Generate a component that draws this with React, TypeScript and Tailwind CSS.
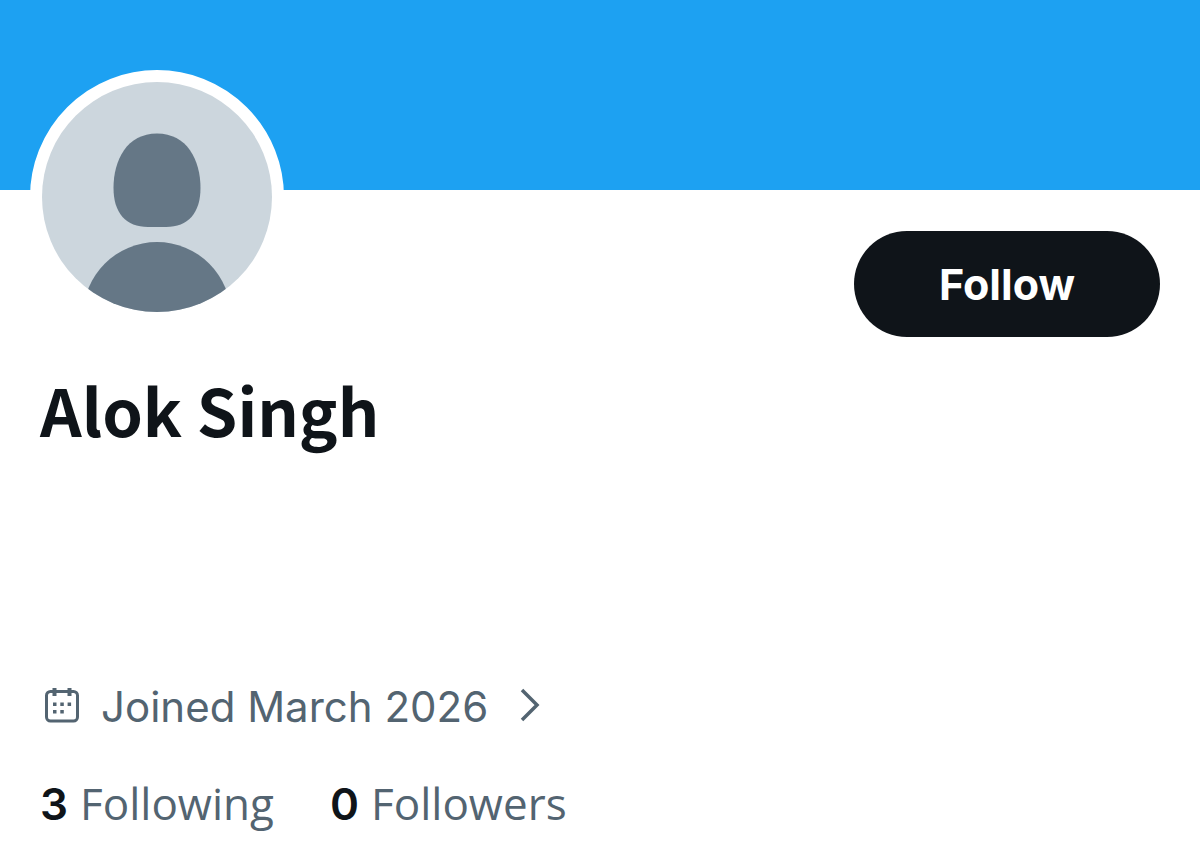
function DefaultAvatar() {
  return (
    <svg viewBox="0 0 230 230" className="block h-full w-full" role="img" aria-label="Profile picture">
      <clipPath id="avatar-clip">
        <circle cx="115" cy="115" r="115" />
      </clipPath>
      <g clipPath="url(#avatar-clip)">
        <rect width="230" height="230" fill="#ccd6dd" />
        <path
          d="M115 51.500C145 51.500 158.500 78 158.500 106C158.500 131 146 145 124 145H106C84 145 71.500 131 71.500 106C71.500 78 85 51.500 115 51.500Z"
          fill="#657786"
        />
        <circle cx="115" cy="234" r="74" fill="#657786" />
      </g>
    </svg>
  );
}

function CalendarIcon() {
  return (
    <svg viewBox="0 0 34 36" className="h-9 w-[34px] shrink-0" aria-hidden="true">
      <rect x="1.500" y="4.500" width="31" height="29.500" rx="4" fill="none" stroke="#536471" strokeWidth="3" />
      <path d="M9.500 1v8M24.500 1v8" stroke="#536471" strokeWidth="4" />
      <path
        d="M8 15.500h3.500v3.500h-3.500zM15.300 15.500h3.500v3.500h-3.500zM22.600 15.500h3.500v3.500h-3.500zM8 23h3.500v3.500h-3.500zM15.300 23h3.500v3.500h-3.500z"
        fill="#536471"
      />
    </svg>
  );
}

function ChevronIcon() {
  return (
    <svg viewBox="0 0 20 34" className="h-[34px] w-5 shrink-0" aria-hidden="true">
      <path d="M2 2L17 17L2 32" fill="none" stroke="#536471" strokeWidth="3.500" />
    </svg>
  );
}

const stats = [
  { count: 3, label: "Following" },
  { count: 0, label: "Followers" },
];

export default function App() {
  return (
    <main className="min-h-screen bg-white pb-5 font-['Open_Sans','Noto_Sans',sans-serif] text-[#0f1419]">
      <div className="h-[190px] bg-[#1da1f2]" />

      <div className="flex items-start justify-between pr-10 pl-[30px]">
        <div className="-mt-[120px] h-[254px] w-[254px] rounded-full border-[12px] border-white bg-white">
          <DefaultAvatar />
        </div>

        <button
          type="button"
          className="mt-[41px] h-[106px] w-[306px] cursor-pointer rounded-full bg-[#0f1419] font-['Inter',sans-serif] text-[43px] leading-none font-bold text-white"
        >
          Follow
        </button>
      </div>

      <div className="px-10">
        <h1 className="mt-8 font-['Noto_Sans_CJK_JP',sans-serif] text-[65px] leading-[80px] font-bold">
          Alok Singh
        </h1>

        <a
          href="#about"
          className="mt-[230px] flex w-fit items-center font-['Inter',sans-serif] text-[42px] leading-[56px] text-[#536471]"
        >
          <span className="mr-[22px] ml-[5px] pb-1">
            <CalendarIcon />
          </span>
          Joined March 2026
          <span className="ml-8 pb-1">
            <ChevronIcon />
          </span>
        </a>

        <div className="mt-10 flex gap-14 text-[44px] leading-[56px]">
          {stats.map((stat) => (
            <a key={stat.label} href={`#${stat.label.toLowerCase()}`} className="flex items-baseline gap-3">
              <span className="font-['Inter',sans-serif] font-semibold">{stat.count}</span>
              <span className="text-[#536471]">{stat.label}</span>
            </a>
          ))}
        </div>
      </div>
    </main>
  );
}
